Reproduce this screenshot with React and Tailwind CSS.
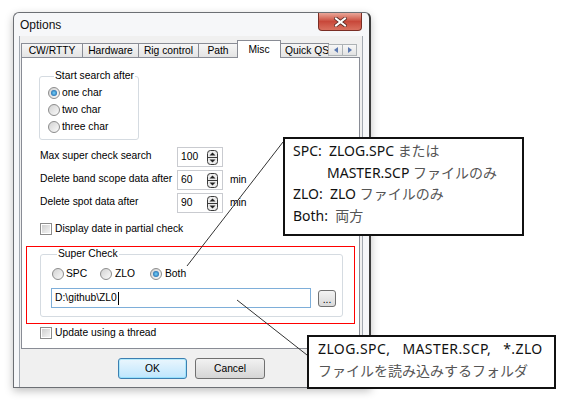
import React from 'react';

const Radio = ({ checked }) => (
  <span className="w-[12px] h-[12px] rounded-full border border-[#8c8c8c] bg-linear-to-br from-[#d2d2d2] to-[#fbfbfb] flex items-center justify-center shrink-0">
    {checked && <span className="w-[6px] h-[6px] rounded-full bg-radial from-[#74d4fb] to-[#0f4f98]" />}
  </span>
);

const Check = () => (
  <span className="w-[12px] h-[12px] border border-[#8c8c8c] bg-white flex items-center justify-center shrink-0">
    <span className="w-[8px] h-[8px] bg-linear-to-br from-[#cfcfcf] to-[#f4f4f4]" />
  </span>
);

const SpinIcon = () => (
  <svg width="11" height="15" viewBox="0 0 11 15">
    <rect x="0.5" y="0.5" width="10" height="14" rx="3" fill="#ececec" stroke="#3a3a3a" />
    <line x1="1" y1="7.5" x2="10" y2="7.5" stroke="#3a3a3a" />
    <path d="M5.5 2.5 L8.5 5.5 H2.5Z" fill="#222" />
    <path d="M5.5 12.5 L8.5 9.5 H2.5Z" fill="#222" />
  </svg>
);

const SpinRow = ({ label, value, unit }) => (
  <div className="flex items-center h-[20px] ml-[18px]">
    <span className="w-[137px] pb-[2px]">{label}</span>
    <div className="w-[46px] h-[20px] border border-[#c9cbd0] bg-white flex items-center pl-[3px] pr-[4px]">
      <span className="flex-1">{value}</span>
      <SpinIcon />
    </div>
    {unit && <span className="ml-[7px]">{unit}</span>}
  </div>
);

const Tab = ({ label, width, first }) => (
  <div
    className={`h-[14px] border border-b-0 border-[#898c95] bg-linear-to-b from-[#f6f6f6] to-[#e4e4e4] flex items-center justify-center ${first ? '' : '-ml-[1px]'}`}
    style={{ width }}
  >
    {label}
  </div>
);

const ArrowBtn = ({ dir }) => (
  <div className="w-[15px] h-[12px] border border-[#adb2b5] bg-linear-to-b from-[#f7f7f7] to-[#e2e2e2] flex items-center justify-center -ml-[1px]">
    <svg width="4" height="6" viewBox="0 0 4 6">
      {dir === 'left' ? <path d="M0 3 L4 0 V6Z" fill="#5a78b0" /> : <path d="M4 3 L0 0 V6Z" fill="#5a78b0" />}
    </svg>
  </div>
);

export default function App() {
  return (
    <div className="relative w-[565px] h-[403px] bg-white overflow-hidden font-['Liberation_Sans',Arial,sans-serif] text-[10.3px] text-black">
      <div className="ml-[13px] mt-[12px] w-[358px] h-[376px] border border-r-2 border-[#6c6f74] border-r-[#3c3c3c] rounded-t-[6px] bg-[#f6f7f9] flex flex-col shadow-[0_3px_8px_rgba(0,0,0,0.25)]">
        {/* title bar */}
        <div className="h-[23px] flex justify-between items-start shrink-0">
          <span className="pl-[6px] pt-[5px] text-[12px] leading-[14px] text-[#111]">Options</span>
          <div className="mr-[7px] w-[44px] h-[18px] rounded-b-[4px] border border-t-0 border-[#7a2d24] bg-linear-to-b from-[#e9a699] via-[#c8483a] to-[#d9705f] flex items-center justify-center">
            <svg width="13" height="10" viewBox="0 0 13 10">
              <path d="M2 1.5 L11 8.5 M11 1.5 L2 8.5" stroke="#5a2a24" strokeWidth="3.6" strokeLinecap="square" />
              <path d="M2 1.5 L11 8.5 M11 1.5 L2 8.5" stroke="#ffffff" strokeWidth="2" strokeLinecap="square" />
            </svg>
          </div>
        </div>

        {/* client area */}
        <div className="ml-[5px] w-[344px] flex-1 bg-[#f0f0f0] border-l border-r border-[#a3a9b1] flex flex-col pt-[4px]">
          {/* tab row */}
          <div className="ml-[1px] h-[17px] flex items-end relative z-10">
            <Tab label="CW/RTTY" width={62} first />
            <Tab label="Hardware" width={57} />
            <Tab label="Rig control" width={61} />
            <Tab label="Path" width={40} />
            <div className="-ml-[1px] w-[44px] h-[18px] -mb-[1px] border border-b-0 border-[#898c95] bg-white flex items-start justify-center pt-[1px]">
              Misc
            </div>
            <div className="-ml-[1px] w-[49px] h-[14px] border border-b-0 border-r-0 border-[#898c95] bg-linear-to-b from-[#f6f6f6] to-[#e4e4e4] whitespace-nowrap pl-[4px] leading-[13px]">
              Quick QS
            </div>
            <div className="flex self-end mb-[1px]">
              <ArrowBtn dir="left" />
              <ArrowBtn dir="right" />
            </div>
          </div>

          {/* tab page */}
          <div className="ml-[1px] w-[339px] h-[292px] shrink-0 border border-[#898c95] bg-white flex flex-col">
            <fieldset className="ml-[17px] mt-[12px] w-[100px] h-[70px] border border-[#d5dbe1] rounded-[3px] pl-[8px] pt-[4px] flex flex-col gap-[3px]">
              <legend className="ml-[6px] px-[1px] leading-[12px]">Start search after</legend>
              <label className="flex items-center gap-[2px] h-[14px]"><Radio checked /> one char</label>
              <label className="flex items-center gap-[2px] h-[14px]"><Radio /> two char</label>
              <label className="flex items-center gap-[2px] h-[14px]"><Radio /> three char</label>
            </fieldset>

            <div className="mt-[7px] flex flex-col gap-[3px]">
              <SpinRow label="Max super check search" value="100" />
              <SpinRow label="Delete band scope data after" value="60" unit="min" />
              <SpinRow label="Delete spot data after" value="90" unit="min" />
            </div>

            <label className="mt-[9px] ml-[18px] flex items-center gap-[3px] h-[13px]">
              <Check /> Display date in partial check
            </label>

            <div className="mt-[11px] ml-[4px] w-[329px] h-[78px] border border-[#ff0000]">
              <fieldset className="ml-[13px] mt-[1px] w-[303px] h-[69px] border border-[#d5dbe1] rounded-[3px] pl-[10px] pt-[7px]">
                <legend className="ml-[6px] px-[1px] leading-[12px]">Super Check</legend>
                <div className="flex items-center h-[14px] ml-[1px]">
                  <label className="w-[48px] flex items-center gap-[2px]"><Radio /> SPC</label>
                  <label className="w-[50px] flex items-center gap-[3px]"><Radio /> ZLO</label>
                  <label className="flex items-center gap-[3px]"><Radio checked /> Both</label>
                </div>
                <div className="mt-[7px] flex items-center">
                  <div className="w-[260px] h-[20px] border border-[#7eaed9] bg-white flex items-center pl-[3px]">
                    D:\github\ZL0<span className="w-px h-[13px] bg-black ml-[1px]" />
                  </div>
                  <div className="ml-[7px] w-[18px] h-[17px] rounded-[3px] border border-[#707070] bg-linear-to-b from-[#f3f3f3] to-[#d9d9d9] flex items-end justify-center pb-[2px] leading-[8px]">
                    ...
                  </div>
                </div>
              </fieldset>
            </div>

            <label className="mt-[2px] ml-[18px] flex items-center gap-[3px] h-[13px]">
              <Check /> Update using a thread
            </label>
          </div>

          {/* buttons */}
          <div className="flex-1 pl-[98px] pt-[9px] flex gap-[8px] items-start">
            <div className="w-[69px] h-[21px] rounded-[3px] border border-[#3c7fb1] bg-linear-to-b from-[#eaf6fd] to-[#bee6fd] flex items-center justify-center shadow-[inset_0_0_0_1px_#48d5fd55]">
              OK
            </div>
            <div className="w-[70px] h-[21px] rounded-[3px] border border-[#707070] bg-linear-to-b from-[#f2f2f2] to-[#d5d5d5] flex items-center justify-center">
              Cancel
            </div>
          </div>
        </div>
      </div>

      {/* annotation lines */}
      <svg className="absolute left-0 top-0 pointer-events-none" width="565" height="403">
        <line x1="283" y1="142" x2="187" y2="266" stroke="#333" strokeWidth="1" />
        <line x1="237" y1="300" x2="307" y2="355" stroke="#333" strokeWidth="1" />
      </svg>

      {/* callouts */}
      <div className="absolute left-[283px] top-[137px] w-[241px] h-[99px] border-2 border-[#111] bg-white pl-[8px] pt-[1px] font-['Noto_Sans','Noto_Sans_CJK_JP',sans-serif] text-[14px] leading-[21.5px] text-[#111] whitespace-pre">
        <div>SPC:  ZLOG.SPC <span className="text-[#555]">または</span></div>
        <div className="pl-[34px]">MASTER.SCP <span className="text-[#555]">ファイルのみ</span></div>
        <div>ZLO:  ZLO <span className="text-[#555]">ファイルのみ</span></div>
        <div>Both:  <span className="text-[#555]">両方</span></div>
      </div>

      <div className="absolute left-[307px] top-[335px] w-[249px] h-[54px] border-2 border-[#111] bg-white pl-[9px] pt-[1px] font-['Noto_Sans','Noto_Sans_CJK_JP',sans-serif] text-[14px] leading-[22px] text-[#111] whitespace-pre">
        <div className="tracking-[0.4px]">ZLOG.SPC,   MASTER.SCP,   *.ZLO</div>
        <div className="text-[#555]">ファイルを読み込みするフォルダ</div>
      </div>
    </div>
  );
}
